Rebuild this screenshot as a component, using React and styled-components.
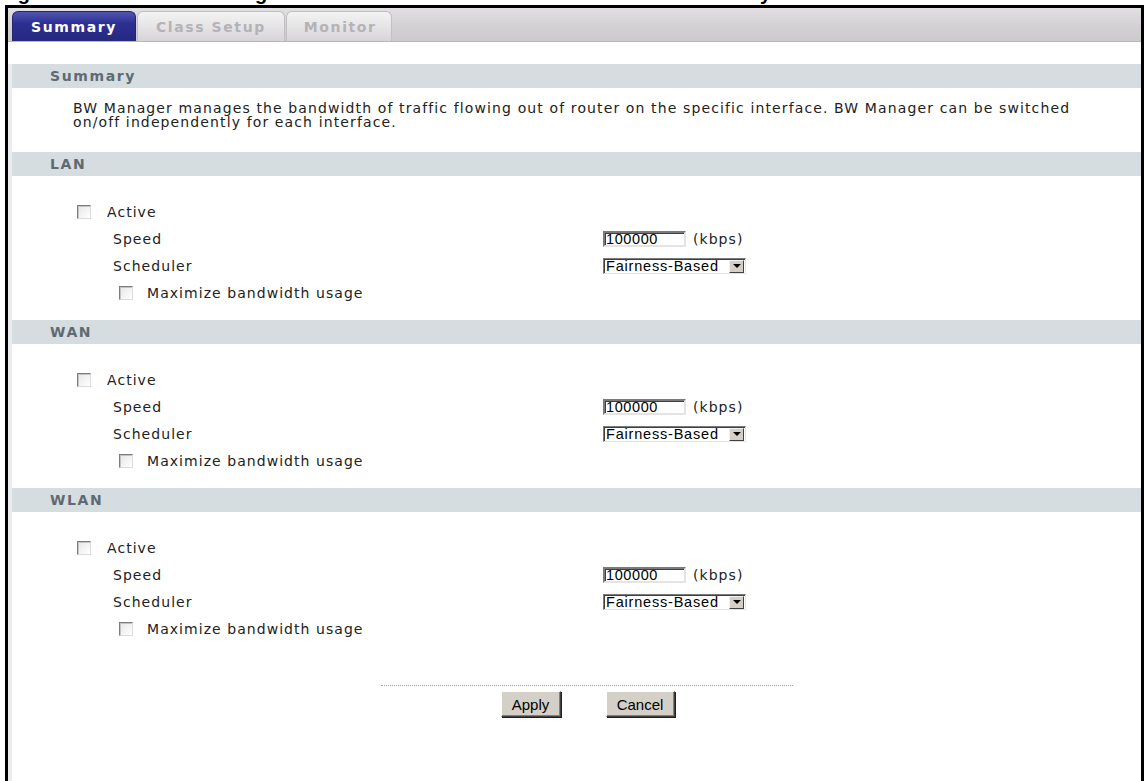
import React from "react";
import styled, { createGlobalStyle } from "styled-components";

const GlobalStyle = createGlobalStyle`
  html, body {
    margin: 0;
    padding: 0;
    background: #ffffff;
  }
  body {
    font-family: "DejaVu Sans", Verdana, sans-serif;
    overflow: hidden;
  }
`;

const sections = ["LAN", "WAN", "WLAN"];

const App = () => {
  return (
    <>
      <GlobalStyle />
      <Caption>
        <CaptionLine>
          <Word $w={204}>Figure 61</Word>
          <Word $w={476}>Manager</Word>
          <Word $w={100}>Summary</Word>
        </CaptionLine>
      </Caption>
      <Frame>
        <TabBar>
          <Tab $active $pl={18} $pr={18}>Summary</Tab>
          <Tab $pl={18} $pr={18}>Class Setup</Tab>
          <Tab $pl={17} $pr={14}>Monitor</Tab>
        </TabBar>
        <Content>
          <HeaderBar $top={22}>Summary</HeaderBar>
          <Description>
            BW Manager manages the bandwidth of traffic flowing out of router on the specific interface. BW Manager can be switched
            on/off independently for each interface.
          </Description>
          {sections.map((name) => (
            <Section key={name}>
              <HeaderBar $top={0}>{name}</HeaderBar>
              <Rows>
                <Row>
                  <CheckLabel $indent={65} $gap={16}>
                    <Checkbox />
                    Active
                  </CheckLabel>
                </Row>
                <Row>
                  <Label>Speed</Label>
                  <Control>
                    <TextInput>100000</TextInput>
                    <Unit>(kbps)</Unit>
                  </Control>
                </Row>
                <Row>
                  <Label>Scheduler</Label>
                  <Control>
                    <Select>
                      <SelectText>Fairness-Based</SelectText>
                      <SelectArrow>
                        <svg width="8" height="4" viewBox="0 0 8 4">
                          <path d="M0 0 L8 0 L4 4 Z" fill="#000" />
                        </svg>
                      </SelectArrow>
                    </Select>
                  </Control>
                </Row>
                <Row>
                  <CheckLabel $indent={107} $gap={14}>
                    <Checkbox />
                    Maximize bandwidth usage
                  </CheckLabel>
                </Row>
              </Rows>
            </Section>
          ))}
          <Footer>
            <Dotted />
            <Buttons>
              <Button $w={60}>Apply</Button>
              <Button $w={69}>Cancel</Button>
            </Buttons>
          </Footer>
        </Content>
      </Frame>
    </>
  );
};

export default App;

const Caption = styled.div`
  height: 5px;
  overflow: hidden;
  font-family: "Liberation Sans", Arial, sans-serif;
  font-weight: bold;
  font-size: 20px;
  line-height: 20px;
  color: #000;
`;

const CaptionLine = styled.div`
  margin-top: -17px;
  white-space: nowrap;
`;

const Word = styled.span`
  display: inline-block;
  width: ${(p) => p.$w}px;
`;

const Frame = styled.div`
  margin-left: 5px;
  width: 1133px;
  min-height: 800px;
  border: 3px solid #000;
  border-bottom: none;
`;

const TabBar = styled.div`
  height: 33px;
  display: flex;
  align-items: flex-end;
  padding-left: 4px;
  background: linear-gradient(#e2dfe2, #d3d0d4 60%, #cdcacd);
  border-bottom: 1px solid #b9b6ba;
`;

const Tab = styled.div`
  height: 29px;
  display: flex;
  align-items: center;
  padding: 0 ${(p) => p.$pr}px 0 ${(p) => p.$pl}px;
  margin-right: 1px;
  border-radius: 6px 6px 0 0;
  font-weight: bold;
  font-size: 14px;
  letter-spacing: 1.6px;
  white-space: nowrap;
  color: ${(p) => (p.$active ? "#ffffff" : "#b5b2b6")};
  background: ${(p) =>
    p.$active
      ? "linear-gradient(#5054b0, #2c2f92 40%, #26297f)"
      : "linear-gradient(#f4f3f4, #e3e1e3 60%, #d6d4d6)"};
  border: 1px solid ${(p) => (p.$active ? "#23266e" : "#c2bfc3")};
  border-bottom: none;
`;

const Content = styled.div`
  border-left: 4px solid #ececec;
  min-height: 720px;
`;

const HeaderBar = styled.div`
  margin-top: ${(p) => p.$top}px;
  height: 24px;
  display: flex;
  align-items: center;
  padding-left: 38px;
  background: #d6dde0;
  font-weight: bold;
  font-size: 14px;
  letter-spacing: 1.6px;
  color: #5f6a72;
`;

const Description = styled.div`
  padding: 13px 40px 23px 61px;
  font-size: 14px;
  line-height: 14px;
  letter-spacing: 1.12px;
  color: #222;
`;

const Section = styled.section`
  margin-bottom: 14px;
`;

const Rows = styled.div`
  padding-top: 22px;
  display: flex;
  flex-direction: column;
`;

const Row = styled.div`
  height: 27px;
  display: flex;
  align-items: center;
  font-size: 14px;
  letter-spacing: 1.05px;
  color: #222;
  white-space: nowrap;
`;

const CheckLabel = styled.label`
  display: flex;
  align-items: center;
  gap: ${(p) => p.$gap}px;
  padding-left: ${(p) => p.$indent}px;
`;

const Checkbox = styled.span`
  width: 12px;
  height: 12px;
  flex: none;
  border: 1px solid;
  border-color: #7c7c7c #dcdcdc #dcdcdc #7c7c7c;
  background: linear-gradient(135deg, #e6e6e6, #ffffff);
  box-shadow: inset 1px 1px 0 #c4c4c4;
`;

const Label = styled.span`
  width: 591px;
  padding-left: 101px;
  box-sizing: border-box;
`;

const Control = styled.div`
  display: flex;
  align-items: center;
  gap: 7px;
`;

const TextInput = styled.div`
  width: 78px;
  height: 12px;
  border: 2px solid;
  border-color: #7a7a7a #e4e4e4 #e4e4e4 #7a7a7a;
  box-shadow: inset 1px 1px 0 #404040;
  font-family: "Liberation Sans", Arial, sans-serif;
  font-size: 14.5px;
  line-height: 13px;
  letter-spacing: 0.6px;
  padding-left: 1px;
  color: #000;
  background: #fff;
`;

const Unit = styled.span``;

const Select = styled.div`
  width: 141px;
  height: 14px;
  display: flex;
  border: 1px solid;
  border-color: #7a7a7a #e4e4e4 #e4e4e4 #7a7a7a;
  box-shadow: inset 1px 1px 0 #404040;
  background: #fff;
`;

const SelectText = styled.span`
  flex: 1;
  font-family: "Liberation Sans", Arial, sans-serif;
  font-size: 14.5px;
  line-height: 15px;
  letter-spacing: 0.8px;
  padding-left: 2px;
  color: #000;
  overflow: hidden;
`;

const SelectArrow = styled.span`
  width: 15px;
  margin: 1px 1px 0 0;
  display: flex;
  align-items: center;
  justify-content: center;
  background: #d4d0c8;
  border: 1px solid;
  border-color: #f4f4f4 #404040 #404040 #f4f4f4;
  box-sizing: border-box;
`;

const Footer = styled.div`
  padding-top: 29px;
  display: flex;
  flex-direction: column;
  align-items: center;
`;

const Dotted = styled.div`
  width: 412px;
  margin-left: 20px;
  border-top: 1px dotted #a8a8a8;
`;

const Buttons = styled.div`
  margin-top: 5px;
  margin-left: 22px;
  display: flex;
  gap: 45px;
`;

const Button = styled.button`
  width: ${(p) => p.$w}px;
  height: 26px;
  padding: 0;
  background: #d4d0c8;
  border: 1px solid;
  border-color: #ffffff #404040 #404040 #ffffff;
  box-shadow: inset -1px -1px 0 #808080, 1px 1px 0 #202020;
  font-family: "Liberation Sans", Arial, sans-serif;
  font-size: 15px;
  color: #000;
`;
